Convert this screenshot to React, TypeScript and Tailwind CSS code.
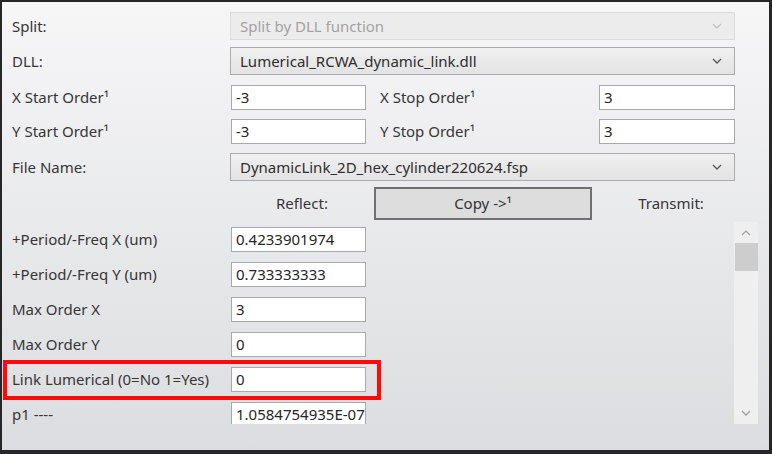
import React from "react";

const font = { fontFamily: '"Noto Sans", "Open Sans", Arial, sans-serif' };

function Chevron({ color = "#6b6b6b" }: { color?: string }) {
  return (
    <svg width="10" height="6" viewBox="0 0 10 6" fill="none">
      <path d="M1 1l4 4 4-4" stroke={color} strokeWidth="1.3" />
    </svg>
  );
}

function Combo({ text, disabled = false }: { text: string; disabled?: boolean }) {
  return (
    <div
      className={
        "flex h-[28px] w-[505px] items-center justify-between pl-[9px] pr-[12px] border " +
        (disabled
          ? "border-[#dcdcdc] bg-[#ececec] text-[#a3a3a3]"
          : "border-[#acacac] bg-gradient-to-b from-[#f0f0f0] to-[#e3e3e3] text-[#2e2e2e]")
      }
    >
      <span>{text}</span>
      <Chevron color={disabled ? "#c2c2c2" : "#555"} />
    </div>
  );
}

function Field({ value, w = "w-[135px]" }: { value: string; w?: string }) {
  return (
    <div className={"flex h-[25px] items-center overflow-hidden whitespace-nowrap border border-[#a9a9a9] bg-white pl-[4px] text-[#262626] " + w}>
      {value}
    </div>
  );
}

function ScrollRow({ label, value }: { label: string; value: string }) {
  return (
    <div className="flex h-[35px] shrink-0 items-center">
      <div className="w-[229px] pl-[10px]">{label}</div>
      <Field value={value} />
    </div>
  );
}

export default function App() {
  return (
    <div className="h-[454px] w-[772px] bg-[#262626] pb-[4px] pl-[2px] pr-[3px] pt-[2px]" style={font}>
      <div className="relative flex h-full w-full flex-col bg-gradient-to-b from-[#f6f6f7] to-[#dcdde0] text-[15px] leading-none text-[#363636]">
        {/* Split */}
        <div className="mt-[10px] flex items-center">
          <div className="w-[228px] pl-[10px]">Split:</div>
          <Combo text="Split by DLL function" disabled />
        </div>
        {/* DLL */}
        <div className="mt-[7px] flex items-center">
          <div className="w-[228px] pl-[10px]">DLL:</div>
          <Combo text="Lumerical_RCWA_dynamic_link.dll" />
        </div>
        {/* X orders */}
        <div className="mt-[10px] flex items-center">
          <div className="w-[229px] pl-[10px]">X Start Order¹</div>
          <Field value="-3" />
          <div className="w-[233px] pl-[14px]">X Stop Order¹</div>
          <Field value="3" w="w-[136px]" />
        </div>
        {/* Y orders */}
        <div className="mt-[9px] flex items-center">
          <div className="w-[229px] pl-[10px]">Y Start Order¹</div>
          <Field value="-3" />
          <div className="w-[233px] pl-[14px]">Y Stop Order¹</div>
          <Field value="3" w="w-[136px]" />
        </div>
        {/* File name */}
        <div className="mt-[9px] flex items-center">
          <div className="w-[228px] pl-[10px]">File Name:</div>
          <Combo text="DynamicLink_2D_hex_cylinder220624.fsp" />
        </div>
        {/* Reflect / Copy / Transmit */}
        <div className="mt-[6px] flex h-[33px] items-center">
          <div className="w-[372px] pl-[228px] text-center">Reflect:</div>
          <button className="flex h-[33px] w-[218px] items-center justify-center border-2 border-[#707070] bg-[#dddddd] text-[#333]">
            Copy -&gt;¹
          </button>
          <div className="w-[150px] pl-[8px] text-center">Transmit:</div>
        </div>
        {/* Scrolling parameter list */}
        <div className="mt-[2px] flex h-[202px] w-full">
          <div className="flex h-full flex-1 flex-col overflow-hidden">
            <ScrollRow label="+Period/-Freq X (um)" value="0.4233901974" />
            <ScrollRow label="+Period/-Freq Y (um)" value="0.733333333" />
            <ScrollRow label="Max Order X" value="3" />
            <ScrollRow label="Max Order Y" value="0" />
            <ScrollRow label="Link Lumerical (0=No 1=Yes)" value="0" />
            <ScrollRow label="p1 ----" value="1.0584754935E-07" />
          </div>
          <div className="mr-[11px] flex h-full w-[24px] flex-col items-center bg-[#efeff0]">
            <div className="flex h-[21px] items-center justify-center">
              <svg width="10" height="6" viewBox="0 0 10 6" fill="none">
                <path d="M1 5l4-4 4 4" stroke="#a0a0a0" strokeWidth="1.2" />
              </svg>
            </div>
            <div className="h-[28px] w-[23px] bg-[#cdcdcd]" />
            <div className="flex-1" />
            <div className="flex h-[22px] items-center justify-center">
              <Chevron color="#a0a0a0" />
            </div>
          </div>
        </div>
        {/* Highlight around the link row */}
        <div className="pointer-events-none absolute left-[1px] top-[358px] h-[40px] w-[378px] border-[4px] border-[#ff0a0a]" />
      </div>
    </div>
  );
}
